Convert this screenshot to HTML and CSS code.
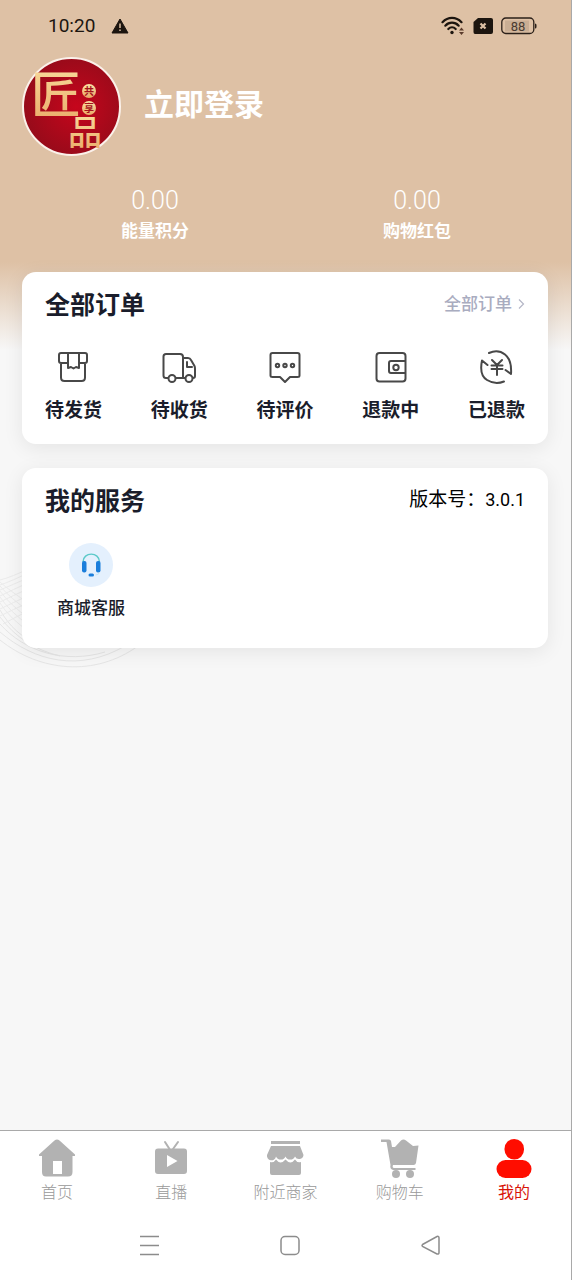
FILE: index.html
```html
<!DOCTYPE html>
<html lang="zh-CN">
<head>
<meta charset="utf-8">
<meta name="viewport" content="width=device-width, initial-scale=1">
<title>我的</title>
<link rel="stylesheet" href="styles.css">
</head>
<body>
<div class="app">
  <svg class="waves" width="150" height="120" viewBox="0 0 150 120" aria-hidden="true">
    <g fill="none" stroke="#e6e6e6" stroke-width="1">
      <path d="M0 88C40 120 95 125 138 94"/>
      <path d="M0 80C35 110 80 120 125 94"/>
      <path d="M0 72C25 100 65 112 105 100"/>
      <path d="M0 65C15 85 35 98 60 104"/>
      <path d="M0 58C10 75 20 84 40 94"/>
    </g>
    <g fill="none" stroke="#ebebeb" stroke-width="1">
      <path d="M0 51Q10 67 30 80M0 45Q10 60 30 74M0 39Q10 53 30 67M0 34Q10 46 30 60M0 30Q10 39 30 52"/>
      <path d="M0 28Q12 25 30 16M0 33Q12 29 30 20M0 38Q12 33 30 25M0 44Q12 38 30 30M0 50Q12 44 30 36M0 57Q12 51 30 43M0 64Q12 58 30 50M3 72Q14 66 30 58"/>
    </g>
  </svg>

  <header class="status">
    <div class="status-side">
      <span class="clock">10:20</span>
      <svg width="18" height="16" viewBox="0 0 18 16" aria-hidden="true"><path d="M9 1L17 15H1Z" fill="#1c150f" stroke="#1c150f" stroke-width="1" stroke-linejoin="round"/><path d="M9 5.500V10M9 11.500V13" stroke="#dec1a5" stroke-width="1.500"/></svg>
    </div>
    <div class="status-side status-icons">
      <svg width="24" height="20" viewBox="0 0 24 20" aria-hidden="true"><g fill="none" stroke="#1c150f" stroke-width="2.200" stroke-linecap="round"><path d="M1.500 6.200C7 .5 15 .5 20.500 6.200"/><path d="M4.300 9.700C8.200 5.700 13.800 5.700 17.700 9.700"/><path d="M7.300 13C9.500 10.800 12.500 10.800 14.700 13"/></g><circle cx="11" cy="16.500" r="1.700" fill="#1c150f"/><path d="M18 14.500L20.500 11.500L23 14.500ZM18 16L20.500 19L23 16Z" fill="#5b3c2c"/></svg>
      <svg width="20" height="16" viewBox="0 0 20 16" aria-hidden="true"><path d="M5 0H18Q20 0 20 2V14Q20 16 18 16H2Q.5 16 .5 14V4Z" fill="#1c150f"/><path d="M7.500 5.500L12.500 10.500M12.500 5.500L7.500 10.500" stroke="#dec1a5" stroke-width="2.200"/></svg>
      <svg width="36" height="18" viewBox="0 0 36 18" role="img" aria-label="电量 88"><rect x="4" y="3.500" width="24" height="11" fill="#c9ae94"/><rect x=".8" y="1" width="32" height="15.500" rx="4" fill="none" stroke="#2b2019" stroke-width="1.300"/><path d="M34 6.500Q35.500 6.500 35.500 8V10Q35.500 11.500 34 11.500Z" fill="#2b2019"/><text x="17" y="13.500" text-anchor="middle" class="battery-text">88</text></svg>
    </div>
  </header>

  <main class="content">
    <section class="profile">
      <svg class="avatar" viewBox="0 0 99 99" role="img" aria-label="共享匠品">
        <defs>
          <radialGradient id="red" cx="55%" cy="50%" r="55%"><stop offset="0" stop-color="#c6061c"/><stop offset="1" stop-color="#960b1a"/></radialGradient>
          <linearGradient id="gold" x1="0" y1="0" x2="0" y2="1"><stop offset="0" stop-color="#fbe3a4"/><stop offset="1" stop-color="#e9a866"/></linearGradient>
        </defs>
        <circle cx="49.500" cy="49.500" r="48.500" fill="url(#red)" stroke="#fbf1ea" stroke-width="2"/>
        <g fill="url(#gold)">
          <text x="9" y="56" class="seal-large">匠</text>
          <text x="46" y="88" class="seal-medium">品</text>
          <circle cx="67" cy="34" r="7"/><circle cx="67" cy="51" r="7"/>
        </g>
        <text x="67" y="38" text-anchor="middle" class="seal-small">共</text>
        <text x="67" y="55" text-anchor="middle" class="seal-small">享</text>
      </svg>
      <a class="login" href="#login">立即登录</a>
    </section>

    <section class="stats">
      <div class="stat"><span class="stat-value">0.00</span><span class="stat-label">能量积分</span></div>
      <div class="stat"><span class="stat-value">0.00</span><span class="stat-label">购物红包</span></div>
    </section>

    <section class="card">
      <div class="card-head">
        <h2>全部订单</h2>
        <a class="more" href="#orders">全部订单<svg width="7" height="12" viewBox="0 0 7 12" aria-hidden="true"><path d="M1 1.500L5.500 6L1 10.500" fill="none" stroke="#b4b6c6" stroke-width="1.200"/></svg></a>
      </div>
      <nav class="orders">
        <a class="order" href="#ship"><svg class="line-icon" viewBox="0 0 36 36" aria-hidden="true"><path d="M5 4H29Q31 4 31 6V12Q31 14 29 14H23M12 14H5Q3 14 3 12V6Q3 4 5 4M12 4V19L15 18L17.500 19.500L20 18L23 19V4M5 14V28.500Q5 32 8.500 32H25.500Q29 32 29 28.500V14"/></svg>待发货</a>
        <a class="order" href="#receive"><svg class="line-icon" viewBox="0 0 36 36" aria-hidden="true"><path d="M7 29H5Q2.500 29 2.500 26.500V7.500Q2.500 5 5 5H19Q22 5 22 8V29H15M22 9H27Q29 9 30 11L33.500 17Q34 18 34 20V27Q34 29 32 29M26 13V18H31M22 29H24"/><circle cx="11" cy="29.500" r="3.500"/><circle cx="28" cy="29.500" r="3.500"/></svg>待收货</a>
        <a class="order" href="#review"><svg class="line-icon" viewBox="0 0 36 36" aria-hidden="true"><path d="M5.500 4H30.500Q32.500 4 32.500 6V26.500Q32.500 28 30.500 28H23L18 33L13 28H5.500Q3.500 28 3.500 26.500V6Q3.500 4 5.500 4Z"/><circle cx="10.500" cy="16.500" r="1.700"/><circle cx="18" cy="16.500" r="1.700"/><circle cx="25.500" cy="16.500" r="1.700"/></svg>待评价</a>
        <a class="order" href="#refunding"><svg class="line-icon" viewBox="0 0 36 36" aria-hidden="true"><rect x="3.500" y="4" width="29" height="28.500" rx="3"/><path d="M32 12H18Q16 12 16 14V22Q16 24 18 24H32"/><circle cx="23" cy="18.500" r="2.700"/></svg>退款中</a>
        <a class="order" href="#refunded"><svg class="line-icon" viewBox="0 0 36 36" aria-hidden="true"><path d="M11 4Q20 0 27 5.500T33 25L27.500 21M26 32.500Q17 36 9 31T4 11.500L9.500 16M14 11L19 16L24 11M13.500 16.500H24.500M13.500 20H24.500M19 16V26"/></svg>已退款</a>
      </nav>
    </section>

    <section class="card">
      <div class="card-head">
        <h2>我的服务</h2>
        <span class="version">版本号：<span class="version-number">3.0.1</span></span>
      </div>
      <nav class="services">
        <a class="service" href="#support">
          <svg class="service-icon" viewBox="0 0 44 44" aria-hidden="true"><circle cx="22" cy="22" r="22" fill="#e4f0fd"/><path d="M14 19C14 8.500 30.500 8.500 30.500 19" fill="none" stroke="#5cc9c9" stroke-width="1.400"/><rect x="13" y="18" width="4.500" height="11.500" rx="2" fill="#1b7edb"/><rect x="27" y="18" width="4.500" height="11.500" rx="2" fill="#1b7edb"/><rect x="19.500" y="30.500" width="5.500" height="3" rx="1.500" fill="#1b7edb"/><path d="M30.500 29Q30 32 26.500 32" fill="none" stroke="#c4e6f5" stroke-width="1"/></svg>
          商城客服
        </a>
      </nav>
    </section>
  </main>

  <nav class="tabs">
    <a class="tab" href="#home"><svg class="tab-icon" viewBox="0 0 40 40" aria-hidden="true"><path d="M17.500 2.500Q20 .5 22.500 2.500L38 16.500V18H35.500V34Q35.500 38.500 31 38.500H9Q5 38.500 5 34V18H2V16.500ZM16 23V36H25V23Z" fill-rule="evenodd"/></svg>首页</a>
    <a class="tab" href="#live"><svg class="tab-icon" viewBox="0 0 40 40" aria-hidden="true"><path d="M7 10.500H33Q36 10.500 36 13.500V33Q36 36 33 36H7Q4 36 4 33V13.500Q4 10.500 7 10.500ZM16 17V29L26.500 23Z" fill-rule="evenodd"/><path d="M14 4L18.500 11M27 4L22 11" fill="none" stroke="currentColor" stroke-width="2" stroke-linecap="round"/></svg>直播</a>
    <a class="tab" href="#nearby"><svg class="tab-icon" viewBox="0 0 40 40" aria-hidden="true"><path d="M6 3H35V6H6ZM6 8H35L38.500 17A4.500 4.500 0 0 1 30 18.500A5 4.500 0 0 1 20.500 18.500A5 4.500 0 0 1 11 18.500A4.500 4.500 0 0 1 2 17ZM5 24Q9 25 11 21.500Q15.500 27.500 20.500 21.500Q25.500 27.500 30 21.500Q32 25 36 24V35Q36 37 34 37H7Q5 37 5 35Z"/></svg>附近商家</a>
    <a class="tab" href="#cart"><svg class="tab-icon" viewBox="0 0 40 40" aria-hidden="true"><path d="M1 1.500H9Q10.500 1.500 11 3L12 9H15L21 2.500Q23.500 .5 26 2.500L33 8L38.500 7.500L36 25Q35.500 27 33.500 27H13Q12 30 14 30H35.500V32H13Q9.500 31 10.500 27L6.500 4H1Z"/><circle cx="16" cy="36" r="4"/><circle cx="30" cy="36" r="4"/></svg>购物车</a>
    <a class="tab tab-active" href="#me" aria-current="page"><svg class="tab-icon" viewBox="0 0 40 40" aria-hidden="true"><rect x="10.500" y="1" width="19.500" height="20.500" rx="9.700"/><rect x="2.500" y="22" width="35" height="18" rx="9"/></svg>我的</a>
  </nav>

  <footer class="system">
    <button class="key" type="button" aria-label="菜单"><svg width="24" height="24" viewBox="0 0 24 24"><path d="M3 3.500H22M3 12.500H22M3 21.500H22"/></svg></button>
    <button class="key" type="button" aria-label="主页"><svg width="24" height="24" viewBox="0 0 24 24"><rect x="3" y="3.500" width="18" height="18" rx="4"/></svg></button>
    <button class="key" type="button" aria-label="返回"><svg width="24" height="24" viewBox="0 0 24 24"><path d="M3.500 11.500L18 3.500Q20 2.800 20 5V19.500Q20 21.500 18 21L3.500 13.500Q2.500 12.500 3.500 11.500Z"/></svg></button>
  </footer>
</div>
</body>
</html>
```
FILE: styles.css
```css
* {
  box-sizing: border-box;
}

body {
  margin: 0;
  font-family: Roboto, "Noto Sans CJK SC", sans-serif;
  color: #1a1d2b;
}

a {
  color: inherit;
  text-decoration: none;
}

.app {
  position: relative;
  z-index: 0;
  display: flex;
  flex-direction: column;
  min-height: 100vh;
  border-right: 1px solid #a9a9a9;
  background: linear-gradient(#dec1a5 0, #dec1a5 262px, #f7f7f7 350px);
}

.waves {
  position: absolute;
  z-index: -1;
  left: 0;
  top: 552px;
}

.status {
  display: flex;
  justify-content: space-between;
  align-items: center;
  height: 52px;
  padding: 0 34px 0 48px;
  color: #1c150f;
}

.status-side {
  display: flex;
  align-items: center;
  gap: 16px;
}

.status-icons {
  gap: 8px;
}

.clock {
  font-size: 19px;
  line-height: 24px;
}

.battery-text {
  font-size: 13px;
  fill: #4a3b30;
}

.content {
  flex: 1;
  padding: 5px 23px 24px 22px;
}

.profile {
  display: flex;
  align-items: center;
  gap: 23px;
}

.avatar {
  width: 99px;
  height: 99px;
}

.seal-large,
.seal-medium,
.seal-small {
  font-family: "Noto Sans CJK SC", sans-serif;
}

.seal-large {
  font-size: 50px;
  font-weight: 500;
}

.seal-medium {
  font-size: 34px;
  font-weight: 500;
}

.seal-small {
  font-size: 10px;
  font-weight: 700;
  fill: #a5121c;
}

.login {
  padding-bottom: 4px;
  font-size: 30px;
  font-weight: 700;
  line-height: 36px;
  color: #fff;
}

.stats {
  display: grid;
  grid-template-columns: 1fr 1fr;
  padding: 30px 0 26px 2px;
  color: #fff;
}

.stat {
  display: flex;
  flex-direction: column;
  align-items: center;
  line-height: 30px;
}

.stat-value {
  font-size: 25px;
  font-weight: 300;
}

.stat-label {
  font-size: 17px;
  font-weight: 700;
}

.card {
  padding: 14px 23px 20px;
  border-radius: 14px;
  background: #fff;
  box-shadow: 0 4px 20px rgba(0, 0, 0, 0.08);
}

.card + .card {
  margin-top: 24px;
  padding-bottom: 28px;
}

.card-head {
  display: flex;
  justify-content: space-between;
  align-items: center;
  line-height: 36px;
}

h2 {
  margin: 0;
  font-size: 25px;
  font-weight: 700;
  line-height: 40px;
}

.more {
  display: flex;
  align-items: center;
  gap: 6px;
  padding-bottom: 4px;
  font-size: 17px;
  font-weight: 500;
  color: #a9acbf;
}

.version {
  padding-bottom: 4px;
  font-size: 19px;
  color: #000;
}

.version-number {
  font-size: 18px;
}

.orders {
  display: flex;
  justify-content: space-between;
  margin-top: 23px;
}

.order {
  display: flex;
  flex-direction: column;
  align-items: center;
  gap: 13px;
  font-size: 19px;
  font-weight: 700;
  line-height: 26px;
}

.line-icon {
  width: 36px;
  height: 36px;
  fill: none;
  stroke: #484848;
  stroke-width: 2;
  stroke-linejoin: round;
  stroke-linecap: round;
}

.services {
  display: flex;
  margin-top: 21px;
}

.service {
  display: flex;
  flex-direction: column;
  align-items: center;
  gap: 9px;
  padding: 0 12px;
  font-size: 17px;
  font-weight: 500;
  line-height: 24px;
}

.service-icon {
  width: 44px;
  height: 44px;
}

.tabs {
  display: grid;
  grid-template-columns: repeat(5, 1fr);
  height: 80px;
  padding-top: 7px;
  border-top: 1px solid #a9a9a9;
  background: #fff;
}

.tab {
  display: flex;
  flex-direction: column;
  align-items: center;
  font-size: 16px;
  font-weight: 300;
  line-height: 30px;
  color: #999;
}

.tab-active {
  font-weight: 400;
  color: #d81408;
}

.tab-icon {
  width: 40px;
  height: 40px;
  color: #b2b2b2;
  fill: currentColor;
}

.tab-active .tab-icon {
  color: #ff0d00;
}

.system {
  display: flex;
  justify-content: space-around;
  align-items: center;
  height: 70px;
  padding: 0 70px 0 78px;
  background: #fff;
}

.key {
  display: flex;
  padding: 0;
  border: 0;
  background: none;
}

.key svg {
  fill: none;
  stroke: #8c8c8c;
  stroke-width: 1.5;
}
```
